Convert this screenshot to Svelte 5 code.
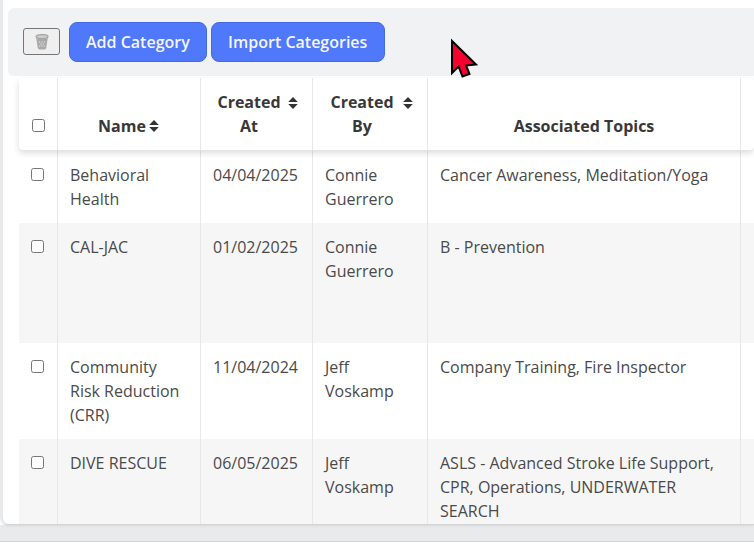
<script>
  const rows = [
    { name: 'Behavioral Health', at: '04/04/2025', by: 'Connie Guerrero', topics: 'Cancer Awareness, Meditation/Yoga', h: 72 },
    { name: 'CAL-JAC', at: '01/02/2025', by: 'Connie Guerrero', topics: 'B - Prevention', h: 120 },
    { name: 'Community Risk Reduction (CRR)', at: '11/04/2024', by: 'Jeff Voskamp', topics: 'Company Training, Fire Inspector', h: 96 },
    { name: 'DIVE RESCUE', at: '06/05/2025', by: 'Jeff Voskamp', topics: 'ASLS - Advanced Stroke Life Support, CPR, Operations, UNDERWATER SEARCH', h: 96 }
  ];
</script>

{#snippet sort()}
  <svg class="sort" viewBox="0 0 10 12" width="10" height="12" aria-hidden="true">
    <path d="M5 0 L9.8 5 H0.2 Z M5 12 L0.2 7 H9.8 Z" fill="#333" />
  </svg>
{/snippet}

<div class="page">
  <main class="card">
    <div class="toolbar">
      <button class="trash" aria-label="Delete">
        <svg viewBox="0 0 14 16" width="14" height="16" aria-hidden="true">
          <ellipse cx="7" cy="2.6" rx="6" ry="2" fill="#cfcfcf" stroke="#a6a6a6" stroke-width="1.3" />
          <path d="M1.2 4 L2.8 14 Q3 15.4 4.6 15.4 H9.4 Q11 15.4 11.2 14 L12.8 4 Q7 6.2 1.2 4 Z" fill="#a9a9a9" />
          <g fill="#dcdcdc">
            <circle cx="4.5" cy="8" r=".7" /><circle cx="7" cy="8" r=".7" /><circle cx="9.5" cy="8" r=".7" />
            <circle cx="5.8" cy="10" r=".7" /><circle cx="8.2" cy="10" r=".7" />
            <circle cx="4.8" cy="12" r=".7" /><circle cx="7" cy="12" r=".7" /><circle cx="9.2" cy="12" r=".7" />
          </g>
        </svg>
      </button>
      <button class="primary">Add Category</button>
      <button class="primary import">Import Categories</button>
    </div>

    <div class="table">
      <div class="row head">
        <div class="cell c0"><input type="checkbox" /></div>
        <div class="cell c1"><span class="one">Name{@render sort()}</span></div>
        <div class="cell c2"><div class="stack"><span>Created<br />At</span>{@render sort()}</div></div>
        <div class="cell c3"><div class="stack"><span>Created<br />By</span>{@render sort()}</div></div>
        <div class="cell c4"><span>Associated Topics</span></div>
        <div class="cell c5"></div>
      </div>
      {#each rows as r, i}
        <div class="row" class:alt={i % 2 === 1} style="height: {r.h}px">
          <div class="cell c0"><input type="checkbox" /></div>
          <div class="cell c1">{r.name}</div>
          <div class="cell c2">{r.at}</div>
          <div class="cell c3">{r.by}</div>
          <div class="cell c4">{r.topics}</div>
          <div class="cell c5"></div>
        </div>
      {/each}
    </div>
  </main>
  <div class="footer"></div>
</div>

<svg class="cursor" viewBox="0 0 30 42" width="30" height="42" aria-hidden="true">
  <path d="M3 3 L27 26.5 L17 27.5 L20.5 36 L13.5 38.5 L9.5 28.5 L3 35 Z" fill="#f5002f" stroke="#000" stroke-width="2" stroke-linejoin="miter" />
</svg>

<style>
  :global(body) {
    margin: 0;
    background: #fff;
  }
  .page {
    width: 754px;
    height: 548px;
    overflow: hidden;
    font-family: "Open Sans", "Noto Sans", sans-serif;
    color: #4a4a4a;
    font-size: 16px;
    line-height: 24px;
  }
  .card {
    position: relative;
    height: 525px;
    box-sizing: border-box;
    padding: 8px 0 0 5px;
    background: #fff;
    border-left: 3px solid #e8e9eb;
    border-bottom: 1px solid #d2d3d5;
    border-bottom-left-radius: 8px;
    box-shadow: 0 1px 3px rgba(0, 0, 0, 0.08);
    overflow: hidden;
  }
  .footer {
    height: 16px;
    background: #e9eaec;
    border-bottom: 1px solid #d4d5d7;
  }
  .toolbar {
    display: flex;
    align-items: center;
    gap: 4px;
    height: 68px;
    box-sizing: border-box;
    padding: 0 0 0 15px;
    background: #f1f2f4;
    border-radius: 6px 0 0 6px;
  }
  .trash {
    width: 37px;
    height: 27px;
    margin: 0 5px 1px 0;
    padding: 0;
    display: flex;
    align-items: center;
    justify-content: center;
    background: #efefef;
    border: 1px solid #767676;
    border-radius: 3px;
  }
  .primary {
    height: 40px;
    padding: 0 16px;
    font: 600 16px/24px "Open Sans", "Noto Sans", sans-serif;
    color: #f4f6ff;
    background: #4f78fb;
    border: 1px solid #4369e4;
    border-radius: 8px;
  }
  .import {
    min-width: 174px;
  }
  .table {
    margin: 2px 0 0 11px;
    width: 735px;
  }
  .row {
    display: flex;
    background: #fff;
  }
  .row.alt {
    background: #f6f6f6;
  }
  .row.head {
    height: 72px;
    margin-bottom: 1px;
    border-radius: 4px;
    box-shadow: 0 3px 6px rgba(0, 0, 0, 0.14);
    font-weight: 700;
    color: #383838;
    position: relative;
    z-index: 1;
  }
  .cell {
    box-sizing: border-box;
    flex: none;
    padding: 12px;
    border-right: 1px solid #e6e7e9;
    overflow: hidden;
  }
  .head .cell {
    display: flex;
    align-items: flex-end;
    justify-content: center;
    text-align: center;
  }
  .one {
    display: inline-flex;
    align-items: center;
    margin-right: 1px;
  }
  .stack {
    display: flex;
    gap: 7px;
    margin-left: 2px;
  }
  .c3 .stack {
    gap: 9px;
    margin-left: 3px;
  }
  .stack .sort {
    margin: 7px 0 0;
  }
  .sort {
    margin-left: 3px;
  }
  .c0 { width: 39px; padding: 17px 0 0 12px; }
  .head .c0 { padding: 0 0 18px 0; }
  .c1 { width: 143px; }
  .c2 { width: 112px; }
  .c3 { width: 115px; }
  .c4 { width: 313px; }
  .c5 { width: 13px; border-right: none; }
  input[type="checkbox"] {
    width: 13px;
    height: 13px;
    margin: 0;
    display: block;
  }
  .cursor {
    position: absolute;
    left: 449px;
    top: 38px;
  }
</style>
